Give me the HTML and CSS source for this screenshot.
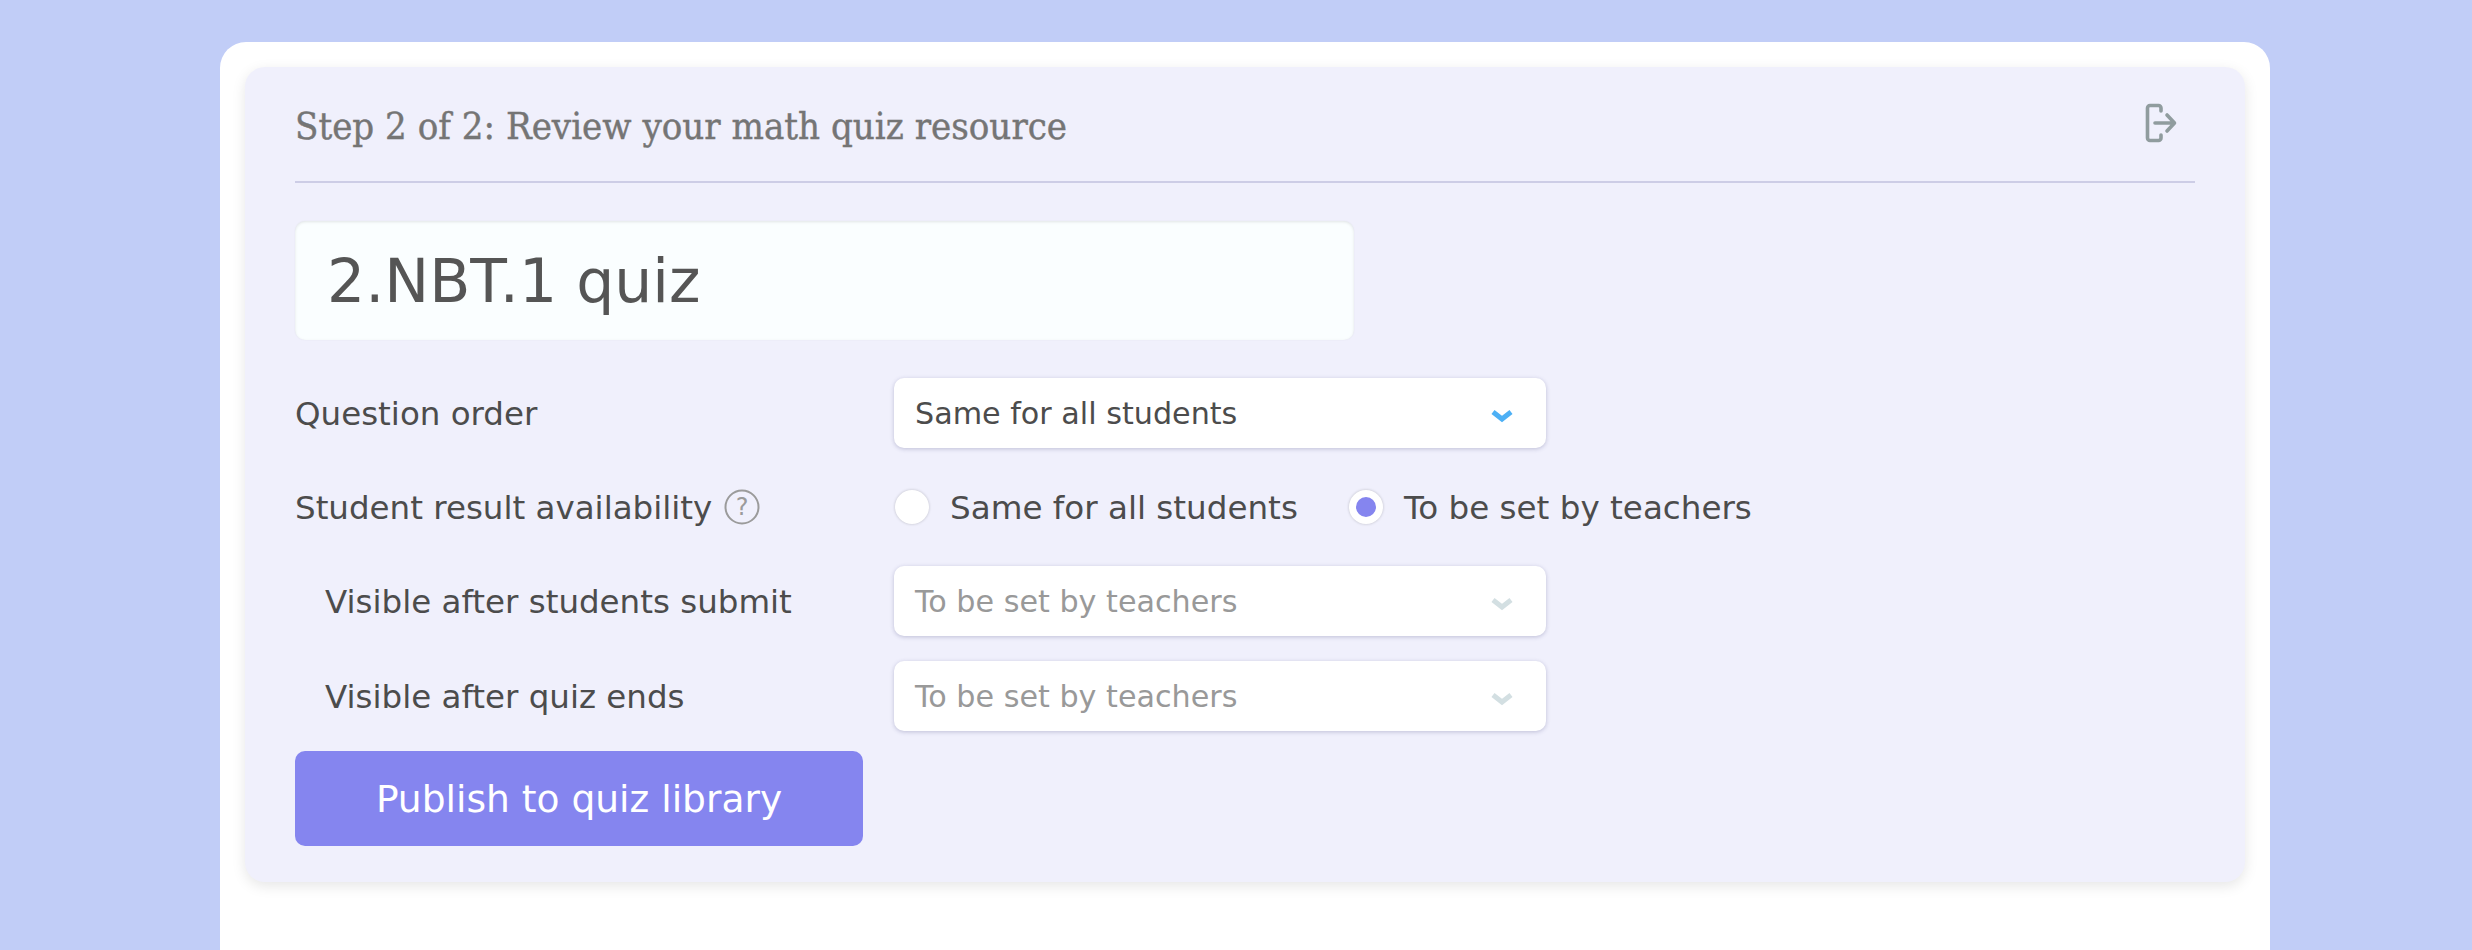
FILE: index.html
```html
<!DOCTYPE html>
<html lang="en">
<head>
<meta charset="utf-8">
<title>Review your math quiz resource</title>
<link rel="stylesheet" href="styles.css">
</head>
<body>
<main class="card">
  <section class="panel">
    <header class="head">
      <h1 class="title">Step 2 of 2: Review your math quiz resource</h1>
      <svg class="exit" width="32" height="40" viewBox="0 0 32 40" fill="none" stroke="#909c9e" stroke-width="3.600" stroke-linecap="round" stroke-linejoin="round"><path d="M16 8V5a2.500 2.500 0 0 0-2.500-2.500H5A2.500 2.500 0 0 0 2.500 5v30A2.500 2.500 0 0 0 5 37.500h8.500A2.500 2.500 0 0 0 16 35v-3"/><path d="M10 20h18.500M22 12l7.500 8-7.500 8"/></svg>
    </header>
    <div class="name">2.NBT.1 quiz</div>
    <div class="row row-first">
      <span class="label">Question order</span>
      <div class="select"><span>Same for all students</span><svg class="chev" width="22" height="14" viewBox="0 0 22 14" fill="none" stroke="#4db0f5" stroke-width="5"><path d="M2 3l9 7 9-7"/></svg></div>
    </div>
    <div class="row row-radio">
      <span class="label">Student result availability<svg class="help" width="36" height="36" viewBox="0 0 36 36"><circle cx="18" cy="18" r="16.500" fill="none" stroke="#9b9b9b" stroke-width="2"/><text x="18" y="26" text-anchor="middle" class="help-q">?</text></svg></span>
      <div class="radios">
        <span class="radio"><i class="dot"></i>Same for all students</span>
        <span class="radio"><i class="dot on"></i>To be set by teachers</span>
      </div>
    </div>
    <div class="row row-sub">
      <span class="label sub">Visible after students submit</span>
      <div class="select off"><span>To be set by teachers</span><svg class="chev" width="22" height="14" viewBox="0 0 22 14" fill="none" stroke="#d3dfe2" stroke-width="5"><path d="M2 3l9 7 9-7"/></svg></div>
    </div>
    <div class="row row-last">
      <span class="label sub">Visible after quiz ends</span>
      <div class="select off"><span>To be set by teachers</span><svg class="chev" width="22" height="14" viewBox="0 0 22 14" fill="none" stroke="#d3dfe2" stroke-width="5"><path d="M2 3l9 7 9-7"/></svg></div>
    </div>
    <button class="publish">Publish to quiz library</button>
  </section>
</main>
</body>
</html>
```
FILE: styles.css
```css
html, body { margin: 0; height: 950px; overflow: hidden; }
body {
  background: #c1cdf7;
  font-family: "DejaVu Sans", sans-serif;
  color: #4c4c4c;
  padding-top: 42px;
  box-sizing: border-box;
}
.card {
  width: 2050px;
  height: 908px;
  margin-left: 220px;
  padding: 25px;
  box-sizing: border-box;
  background: #fff;
  border-radius: 26px 26px 0 0;
}
.panel {
  height: 815px;
  box-sizing: border-box;
  padding: 0 50px;
  background: #f0f0fc;
  border-radius: 20px;
  box-shadow: 0 4px 14px rgba(0, 0, 0, 0.1);
}
.head {
  height: 116px;
  padding-top: 4px;
  box-sizing: border-box;
  display: flex;
  justify-content: space-between;
  align-items: center;
  border-bottom: 2px solid #cdcde6;
}
.title {
  margin: 0;
  font-family: "DejaVu Serif", serif;
  font-stretch: condensed;
  font-weight: 400;
  font-size: 38px;
  color: #757575;
  -webkit-text-stroke: 0.4px #757575;
}
.exit { margin-right: 18px; margin-top: -7px; }
.name {
  width: 1059px;
  height: 119px;
  margin-top: 38px;
  padding-left: 32px;
  box-sizing: border-box;
  display: flex;
  align-items: center;
  background: #fafeff;
  border-radius: 10px;
  box-shadow: inset 0 1px 3px rgba(0, 0, 0, 0.1), 0 0 2px rgba(0, 0, 0, 0.05);
  font-size: 60px;
  color: #555;
}
.row { display: flex; align-items: center; }
.row-first { margin-top: 38px; height: 70px; }
.row-radio { margin-top: 24px; height: 70px; }
.row-sub { margin-top: 24px; height: 70px; }
.row-last { margin-top: 25px; height: 70px; }
.label {
  width: 599px;
  flex: none;
  padding-top: 2px;
  box-sizing: border-box;
  font-size: 32.500px;
  display: flex;
  align-items: center;
  gap: 12px;
}
.sub { padding-left: 30px; }
.help { flex: none; margin-top: -2px; }
.help-q { font-size: 24px; fill: #9b9b9b; font-family: "DejaVu Sans", sans-serif; }
.select {
  width: 652px;
  height: 70px;
  padding: 0 33px 0 21px;
  box-sizing: border-box;
  display: flex;
  justify-content: space-between;
  align-items: center;
  background: #fff;
  border-radius: 10px;
  box-shadow: 0 1px 4px rgba(60, 60, 120, 0.28);
  font-size: 30.200px;
}
.chev { margin-top: 5px; }
.off { color: #999; }
.radios { display: flex; gap: 51px; margin-left: 1px; }
.radio { display: flex; align-items: center; gap: 21px; font-size: 32.600px; padding-top: 2px; }
.dot {
  width: 34px;
  height: 34px;
  box-sizing: border-box;
  flex: none;
  margin-top: -2px;
  border-radius: 50%;
  background: #fff;
  box-shadow: 0 0 3px rgba(0, 0, 0, 0.22);
  display: block;
}
.on { border: 7px solid #fff; background: #8585ef; }
.publish {
  display: block;
  width: 568px;
  height: 95px;
  margin-top: 20px;
  border: 0;
  border-radius: 10px;
  background: #8585ef;
  color: #fff;
  font: 37.600px "DejaVu Sans", sans-serif;
}
```
